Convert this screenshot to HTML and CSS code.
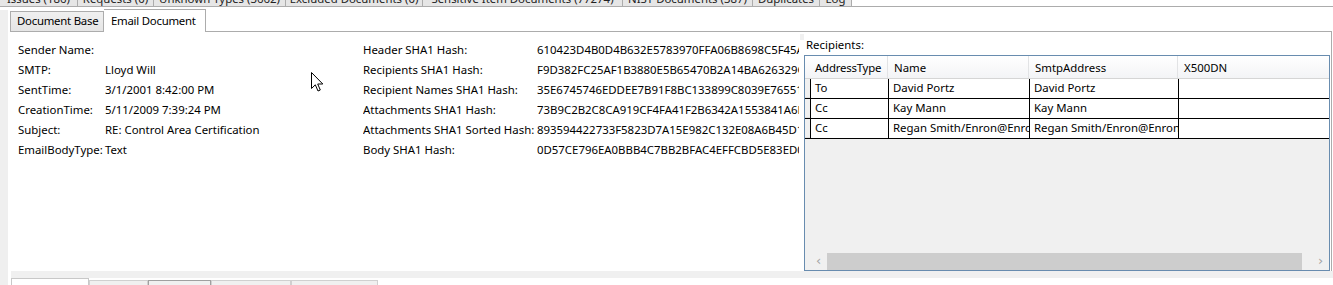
FILE: index.html
```html
<!DOCTYPE html>
<html>
<head>
<meta charset="utf-8">
<link rel="stylesheet" href="styles.css">
</head>
<body>
<div class="top-tabs">
  <div class="ttab w1"><span>Issues (186)</span></div>
  <div class="ttab w2"><span>Requests (0)</span></div>
  <div class="ttab w3"><span>Unknown Types (3662)</span></div>
  <div class="ttab w4"><span>Excluded Documents (0)</span></div>
  <div class="ttab w5"><span>Sensitive Item Documents (77274)</span></div>
  <div class="ttab w6"><span>NIST Documents (387)</span></div>
  <div class="ttab w7"><span>Duplicates</span></div>
  <div class="ttab w8"><span>Log</span></div>
</div>
<div class="main">
  <div class="side"><div class="side-fill"></div></div>
  <div class="doc">
    <div class="subtabs">
      <div class="subtab">Document Base</div>
      <div class="subtab active">Email Document</div>
    </div>
    <div class="panel">
      <div class="fields left">
        <div class="row"><span class="lbl">Sender Name:</span><span class="val"></span></div>
        <div class="row"><span class="lbl">SMTP:</span><span class="val">Lloyd Will</span></div>
        <div class="row"><span class="lbl">SentTime:</span><span class="val">3/1/2001 8:42:00 PM</span></div>
        <div class="row"><span class="lbl">CreationTime:</span><span class="val">5/11/2009 7:39:24 PM</span></div>
        <div class="row"><span class="lbl">Subject:</span><span class="val">RE: Control Area Certification</span></div>
        <div class="row"><span class="lbl">EmailBodyType:</span><span class="val">Text</span></div>
      </div>
      <div class="fields mid">
        <div class="row"><span class="lbl">Header SHA1 Hash:</span><span class="val">610423D4B0D4B632E5783970FFA06B8698C5F45A2E</span></div>
        <div class="row"><span class="lbl">Recipients SHA1 Hash:</span><span class="val">F9D382FC25AF1B3880E5B65470B2A14BA626329C7D</span></div>
        <div class="row"><span class="lbl">Recipient Names SHA1 Hash:</span><span class="val">35E6745746EDDEE7B91F8BC133899C8039E76551B0</span></div>
        <div class="row"><span class="lbl">Attachments SHA1 Hash:</span><span class="val">73B9C2B2C8CA919CF4FA41F2B6342A1553841A6E92</span></div>
        <div class="row"><span class="lbl">Attachments SHA1 Sorted Hash:</span><span class="val">893594422733F5823D7A15E982C132E08A6B45D1F4</span></div>
        <div class="row"><span class="lbl">Body SHA1 Hash:</span><span class="val">0D57CE796EA0BBB4C7BB2BFAC4EFFCBD5E83ED09A3</span></div>
      </div>
      <div class="splitter"><div class="grip"></div></div>
      <div class="recip">
        <div class="recip-title">Recipients:</div>
        <div class="grid">
          <div class="grow head">
            <div class="rh"></div>
            <div class="c c1">AddressType</div>
            <div class="c c2">Name</div>
            <div class="c c3">SmtpAddress</div>
            <div class="c c4">X500DN</div>
          </div>
          <div class="grow data">
            <div class="rh"></div>
            <div class="c c1">To</div>
            <div class="c c2">David Portz</div>
            <div class="c c3">David Portz</div>
            <div class="c c4"></div>
          </div>
          <div class="grow data">
            <div class="rh"></div>
            <div class="c c1">Cc</div>
            <div class="c c2">Kay Mann</div>
            <div class="c c3">Kay Mann</div>
            <div class="c c4"></div>
          </div>
          <div class="grow data">
            <div class="rh"></div>
            <div class="c c1">Cc</div>
            <div class="c c2">Regan Smith/Enron@Enron</div>
            <div class="c c3">Regan Smith/Enron@Enron</div>
            <div class="c c4"></div>
          </div>
          <div class="grid-empty"></div>
          <div class="hscroll">
            <div class="arrow">&#8249;</div>
            <div class="track"><div class="thumb"></div></div>
            <div class="arrow">&#8250;</div>
          </div>
        </div>
      </div>
    </div>
    <div class="bottom-strip"></div>
    <div class="bottom-tabs">
      <div class="btab b1 sel"></div>
      <div class="btab b2"></div>
      <div class="btab b3 dark"></div>
      <div class="btab b4"></div>
      <div class="btab b5"></div>
    </div>
  </div>
</div>
<svg class="cursor" width="13" height="21" viewBox="0 0 13 21">
  <path d="M0.5 0.5 L0.5 16.5 L4.3 12.8 L7 19 L9.3 18 L6.7 12 L11.8 12 Z" fill="#fff" stroke="#000" stroke-width="1" stroke-linejoin="miter"/>
</svg>
</body>
</html>
```
FILE: styles.css
```css
* { box-sizing: border-box; }
html, body {
  margin: 0;
  padding: 0;
}
body {
  width: 1333px;
  height: 285px;
  overflow: hidden;
  background: #fff;
  font-family: "Noto Sans", "Open Sans", sans-serif;
  font-size: 11.4px;
  color: #000;
  position: relative;
}

/* top tab strip (cut off) */
.top-tabs {
  display: flex;
  height: 7px;
  border-bottom: 1px solid #acacac;
}
.ttab {
  flex: none;
  height: 6px;
  background: #e6e6e6;
  border-right: 1px solid #acacac;
  display: flex;
  align-items: flex-end;
  justify-content: center;
  overflow: hidden;
  color: #222;
}
.ttab span {
  line-height: 16px;
  white-space: nowrap;
  margin-bottom: -1px;
}
.w1 { width: 78px; }
.w2 { width: 76px; }
.w3 { width: 132px; }
.w4 { width: 137px; }
.w5 { width: 200px; }
.w6 { width: 130px; }
.w7 { width: 67px; }
.w8 { width: 32px; }

.main {
  display: flex;
  height: 278px;
}
.side {
  width: 10px;
  flex: none;
  padding-top: 3px;
}
.side-fill {
  width: 8px;
  height: 100%;
  background: #efefef;
}
.doc {
  flex: 1;
  display: flex;
  flex-direction: column;
}
.subtabs {
  display: flex;
  align-items: flex-end;
  height: 24px;
  padding-top: 2px;
}
.subtab {
  height: 20px;
  width: 94px;
  padding-left: 6px;
  line-height: 18px;
  letter-spacing: -0.25px;
  background: linear-gradient(#f0f0f0, #e5e5e5);
  border: 1px solid #acacac;
  border-bottom: none;
  white-space: nowrap;
}
.subtab.active {
  height: 23px;
  width: 102px;
  background: #fff;
  border-left: none;
  padding-left: 7px;
  line-height: 21px;
  margin-bottom: -1px;
  position: relative;
  z-index: 1;
}
.panel {
  display: flex;
  height: 240px;
  border-top: 1px solid #acacac;
  border-right: 1px solid #acacac;
  margin-right: 1px;
}
.fields {
  padding-top: 8px;
  flex: none;
}
.fields.left {
  width: 353px;
  padding-left: 8px;
}
.fields.mid {
  width: 437px;
  overflow: hidden;
}
.row {
  display: flex;
  height: 20px;
  line-height: 20px;
  white-space: nowrap;
}
.left .lbl { width: 87px; flex: none; }
.mid .lbl { width: 174px; flex: none; }
.mid .val {
  width: 262px;
  overflow: hidden;
}
.splitter {
  width: 4px;
  flex: none;
  padding-top: 2px;
}
.grip {
  width: 4px;
  height: 6px;
  background: #f0f0f0;
}
.recip {
  flex: 1;
  display: flex;
  flex-direction: column;
  padding-top: 4px;
}
.recip-title {
  height: 18px;
  line-height: 17px;
  padding-left: 2px;
}
.grid {
  flex: 1;
  margin-top: 1px;
  margin-right: 1px;
  border: 1px solid #688caf;
  background: #f0f0f0;
  display: flex;
  flex-direction: column;
}
.grow {
  display: flex;
  white-space: nowrap;
}
.grow .rh {
  width: 5px;
  flex: none;
  background: #f0f0f0;
  border-bottom: 1px solid #e0e0e0;
}
.grow.head {
  height: 23px;
  background: linear-gradient(#ffffff, #f3f4f6);
  border-bottom: 1px solid #d5d5d5;
}
.grow.head .rh { background: transparent; border: none; }
.grow.head .c {
  line-height: 23px;
  padding-left: 6px;
  border-right: 1px solid #e2e3e5;
}
.grow.head .c1 { letter-spacing: -0.2px; padding-left: 5px; }
.grow.data {
  height: 20px;
  background: #fff;
  border-bottom: 1px solid #000;
}
.grow.data .c {
  line-height: 18px;
  padding-left: 4px;
  border-left: 1px solid #000;
}
.c { overflow: hidden; flex: none; }
.c1 { width: 78px; }
.c2 { width: 141px; }
.c3 { width: 149px; }
.c4 { flex: 1; border-right: none !important; }
.grid-empty { flex: 1; }
.hscroll {
  height: 17px;
  display: flex;
  margin-left: 5px;
  background: #f0f0f0;
}
.arrow {
  width: 17px;
  flex: none;
  text-align: center;
  line-height: 15px;
  font-size: 13px;
  color: #a3a3a3;
  font-family: "DejaVu Sans", sans-serif;
}
.track {
  flex: 1;
  display: flex;
}
.thumb {
  width: 475px;
  background: #cdcdcd;
}
.bottom-strip {
  height: 7px;
  background: #f0f0f0;
  margin-left: 1px;
}
.bottom-tabs {
  display: flex;
  align-items: flex-end;
  height: 7px;
  padding-left: 1px;
}
.btab {
  flex: none;
  height: 5px;
  border: 1px solid #d0d0d0;
  border-bottom: none;
  background: #f0f0f0;
}
.btab.sel { height: 7px; background: #fff; border-color: #c8c8c8; }
.btab.dark { border-color: #a0a0a0; }
.b1 { width: 78px; }
.b2 { width: 59px; }
.b3 { width: 63px; }
.b4 { width: 80px; }
.b5 { width: 87px; }

.cursor {
  position: absolute;
  left: 311px;
  top: 72px;
}
```
